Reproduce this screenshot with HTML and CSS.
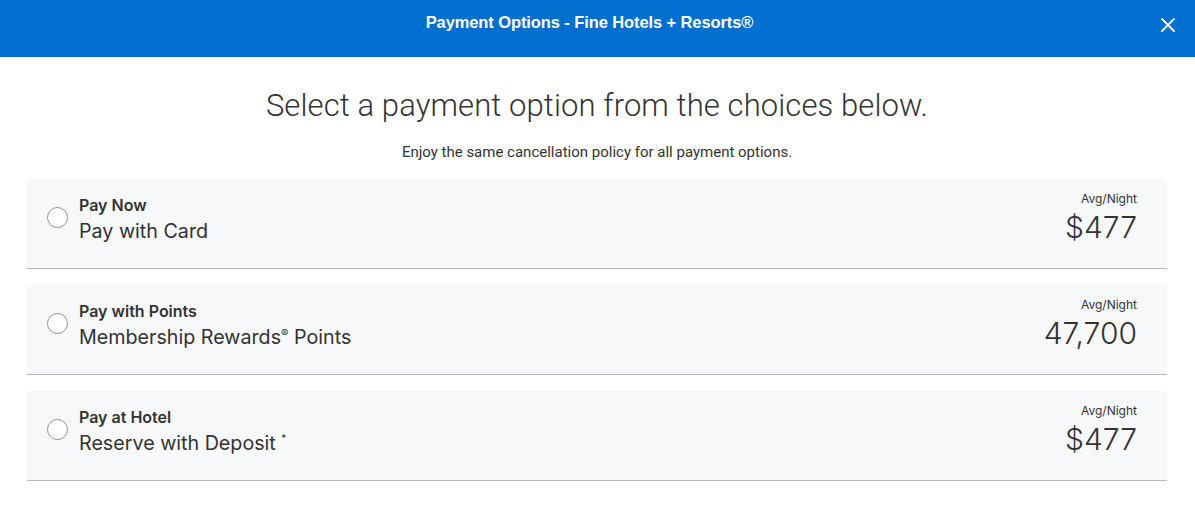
FILE: index.html
```html
<!DOCTYPE html>
<html lang="en">

<head>
    <meta charset="UTF-8">
    <meta name="viewport" content="width=device-width, initial-scale=1.0">
    <title>Payment Options - Fine Hotels + Resorts</title>
    <link rel="stylesheet" href="styles.css">
</head>

<body>
    <header class="modal-header">
        <h2 class="modal-title">Payment Options - Fine Hotels + Resorts&reg;</h2>
        <button class="close" aria-label="Close">
            <svg width="16" height="16" viewBox="0 0 16 16">
                <path d="M2 2 L14 14 M14 2 L2 14" stroke="#fff" stroke-width="1.8" fill="none" stroke-linecap="round"/>
            </svg>
        </button>
    </header>

    <main class="modal-body">
        <h1 class="heading">Select a payment option from the choices below.</h1>
        <p class="subtext">Enjoy the same cancellation policy for all payment options.</p>

        <div class="options">
            <label class="option">
                <span class="radio"></span>
                <span class="option-text">
                    <span class="option-title">Pay Now</span>
                    <span class="option-sub">Pay with Card</span>
                </span>
                <span class="option-price">
                    <span class="avg">Avg/Night</span>
                    <span class="price">$477</span>
                </span>
            </label>

            <label class="option">
                <span class="radio"></span>
                <span class="option-text">
                    <span class="option-title">Pay with Points</span>
                    <span class="option-sub">Membership Rewards<sup>&reg;</sup> Points</span>
                </span>
                <span class="option-price">
                    <span class="avg">Avg/Night</span>
                    <span class="price">47,700</span>
                </span>
            </label>

            <label class="option">
                <span class="radio"></span>
                <span class="option-text">
                    <span class="option-title">Pay at Hotel</span>
                    <span class="option-sub">Reserve with Deposit <sup class="star">*</sup></span>
                </span>
                <span class="option-price">
                    <span class="avg">Avg/Night</span>
                    <span class="price">$477</span>
                </span>
            </label>
        </div>
    </main>
</body>

</html>
```

FILE: styles.css
```css
body {
    margin: 0;
    padding: 0;
    font-family: "Liberation Sans", Arial, sans-serif;
    background: #fff;
    color: #333;
}

.modal-header {
    position: relative;
    height: 57px;
    background: #006fcf;
    box-sizing: border-box;
    padding: 12px 16px 0 0;
}

.modal-title {
    margin: 0;
    text-align: center;
    color: #fff;
    font-size: 16.5px;
    line-height: 20px;
    font-weight: bold;
    letter-spacing: -0.1px;
}

.close {
    position: absolute;
    top: 17px;
    right: 19px;
    width: 16px;
    height: 16px;
    padding: 0;
    border: none;
    background: none;
    cursor: pointer;
}

.close svg {
    display: block;
}

.modal-body {
    padding: 0 28px 0 27px;
}

.heading {
    margin: 30px 0 0;
    text-align: center;
    font-family: Roboto, "Liberation Sans", sans-serif;
    font-weight: 300;
    font-size: 31px;
    line-height: 37px;
    color: #333;
    letter-spacing: 0.1px;
}

.subtext {
    margin: 18px 0 0;
    text-align: center;
    font-family: Roboto, "Liberation Sans", sans-serif;
    font-size: 15px;
    line-height: 20px;
    color: #333;
}

.options {
    margin-top: 17px;
    display: flex;
    flex-direction: column;
    gap: 16px;
}

.option {
    display: flex;
    align-items: flex-start;
    height: 90px;
    box-sizing: border-box;
    padding: 15px 30px 0 20px;
    background: #f7f8f9;
    border-bottom: 1px solid #b8b8b8;
    cursor: pointer;
}

.radio {
    flex: none;
    width: 21px;
    height: 21px;
    margin-top: 13px;
    margin-right: 11px;
    border: 1px solid #8f8f8f;
    border-radius: 50%;
    background: #fff;
    box-sizing: border-box;
}

.option-text {
    flex: 1;
    display: flex;
    flex-direction: column;
    font-family: Inter, "Liberation Sans", sans-serif;
}

.option-title {
    font-size: 16px;
    line-height: 22px;
    font-weight: 600;
    color: #333;
}

.option-sub {
    font-size: 19.7px;
    line-height: 30px;
    color: #333;
}

.option-sub sup {
    font-size: 11px;
    vertical-align: 0;
    position: relative;
    top: -7px;
}

.option-sub .star {
    font-size: 10px;
    top: -8px;
}

.option-price {
    display: flex;
    flex-direction: column;
    align-items: flex-end;
    margin-top: -3px;
    font-family: Inter, "Liberation Sans", sans-serif;
}

.avg {
    font-size: 12px;
    line-height: 16px;
    color: #333;
}

.price {
    font-size: 30px;
    line-height: 36px;
    font-weight: 300;
    color: #333;
    margin-top: 2px;
}
```
